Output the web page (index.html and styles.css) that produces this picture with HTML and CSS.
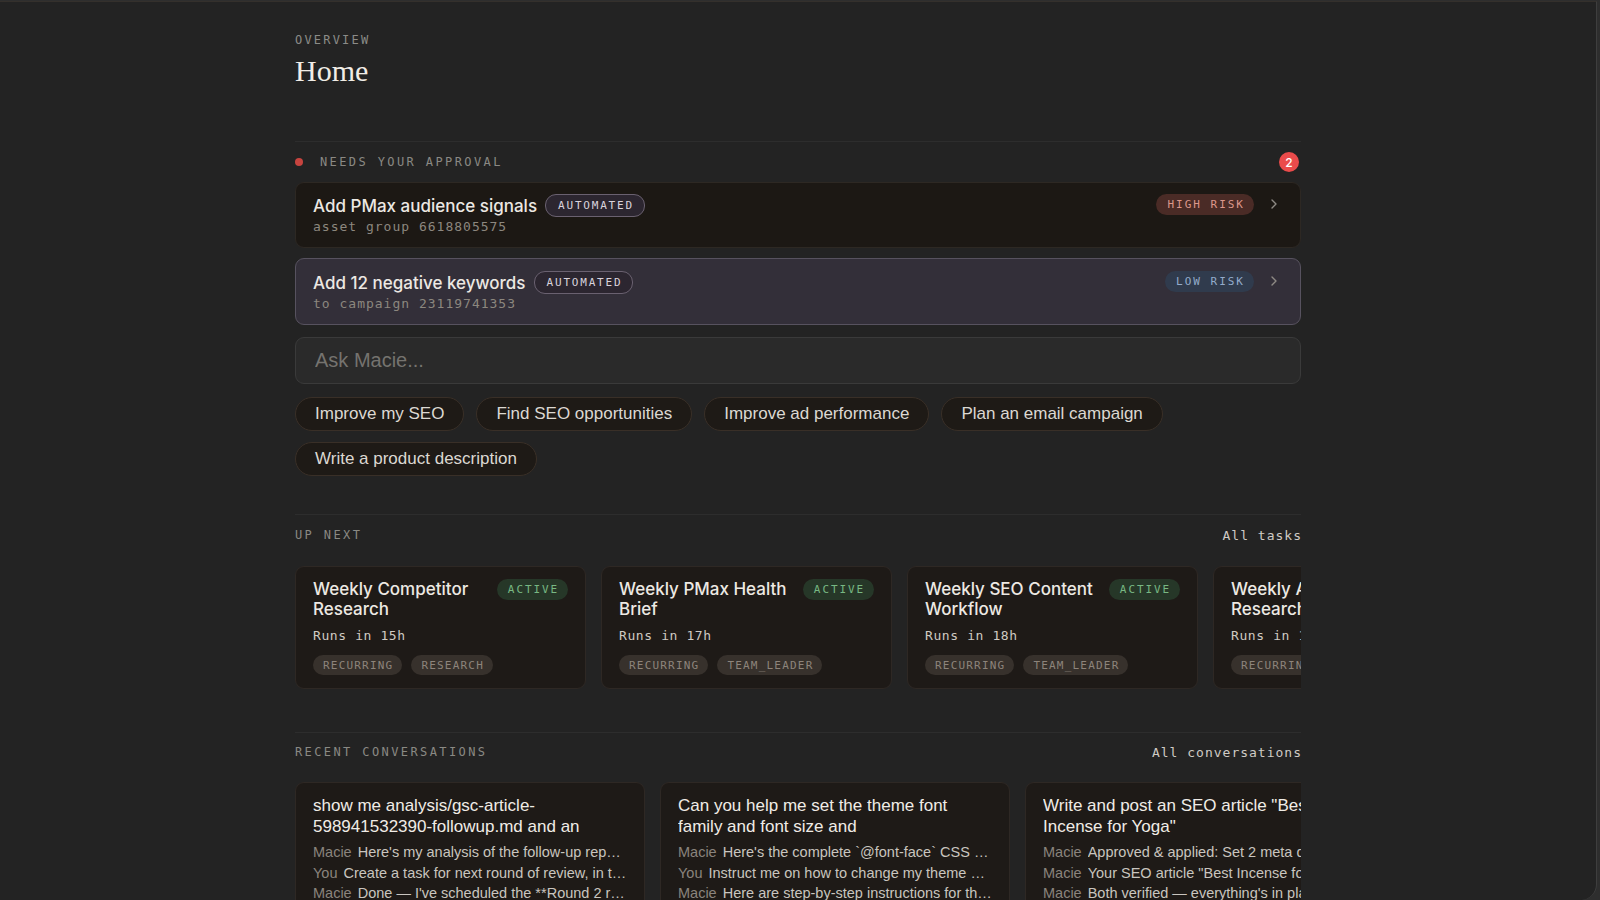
FILE: index.html
```html
<!DOCTYPE html>
<html lang="en">
<head>
    <meta charset="UTF-8">
    <meta name="viewport" content="width=device-width, initial-scale=1.0">
    <title>Home</title>
    <link rel="stylesheet" href="styles.css">
</head>
<body>
    <div class="panel">
        <main class="page">
            <header class="page-head">
                <div class="eyebrow">OVERVIEW</div>
                <h1>Home</h1>
            </header>

            <section class="section approvals">
                <div class="section-head">
                    <div class="section-title"><span class="dot"></span>NEEDS YOUR APPROVAL</div>
                    <span class="count">2</span>
                </div>

                <div class="approval-list">
                    <div class="approval">
                        <div class="approval-main">
                            <div class="approval-title">Add PMax audience signals <span class="pill pill-auto">AUTOMATED</span></div>
                            <div class="approval-sub">asset group 6618805575</div>
                        </div>
                        <div class="approval-side">
                            <span class="pill pill-high">HIGH RISK</span>
                            <svg class="chev" width="10" height="12" viewBox="0 0 10 12"><polyline points="3,2 7,6 3,10" fill="none" stroke="currentColor" stroke-width="1.4" stroke-linecap="round" stroke-linejoin="round"/></svg>
                        </div>
                    </div>
                    <div class="approval selected">
                        <div class="approval-main">
                            <div class="approval-title">Add 12 negative keywords <span class="pill pill-auto">AUTOMATED</span></div>
                            <div class="approval-sub">to campaign 23119741353</div>
                        </div>
                        <div class="approval-side">
                            <span class="pill pill-low">LOW RISK</span>
                            <svg class="chev" width="10" height="12" viewBox="0 0 10 12"><polyline points="3,2 7,6 3,10" fill="none" stroke="currentColor" stroke-width="1.4" stroke-linecap="round" stroke-linejoin="round"/></svg>
                        </div>
                    </div>
                </div>

                <input class="ask" type="text" placeholder="Ask Macie...">

                <div class="chips">
                    <button class="chip">Improve my SEO</button>
                    <button class="chip">Find SEO opportunities</button>
                    <button class="chip">Improve ad performance</button>
                    <button class="chip">Plan an email campaign</button>
                    <button class="chip">Write a product description</button>
                </div>
            </section>

            <section class="section upnext">
                <div class="section-head">
                    <div class="section-title">UP NEXT</div>
                    <a class="link" href="#">All tasks</a>
                </div>
                <div class="scroller">
                    <div class="task">
                        <div class="task-head">
                            <div class="task-title">Weekly Competitor Research</div>
                            <span class="pill pill-active">ACTIVE</span>
                        </div>
                        <div class="task-when">Runs in 15h</div>
                        <div class="tags"><span class="tag">RECURRING</span><span class="tag">RESEARCH</span></div>
                    </div>
                    <div class="task">
                        <div class="task-head">
                            <div class="task-title">Weekly PMax Health Brief</div>
                            <span class="pill pill-active">ACTIVE</span>
                        </div>
                        <div class="task-when">Runs in 17h</div>
                        <div class="tags"><span class="tag">RECURRING</span><span class="tag">TEAM_LEADER</span></div>
                    </div>
                    <div class="task">
                        <div class="task-head">
                            <div class="task-title">Weekly SEO Content Workflow</div>
                            <span class="pill pill-active">ACTIVE</span>
                        </div>
                        <div class="task-when">Runs in 18h</div>
                        <div class="tags"><span class="tag">RECURRING</span><span class="tag">TEAM_LEADER</span></div>
                    </div>
                    <div class="task">
                        <div class="task-head">
                            <div class="task-title">Weekly Ads Keyword Research</div>
                            <span class="pill pill-active">ACTIVE</span>
                        </div>
                        <div class="task-when">Runs in 19h</div>
                        <div class="tags"><span class="tag">RECURRING</span><span class="tag">RESEARCH</span></div>
                    </div>
                </div>
            </section>

            <section class="section recent">
                <div class="section-head">
                    <div class="section-title">RECENT CONVERSATIONS</div>
                    <a class="link" href="#">All conversations</a>
                </div>
                <div class="scroller">
                    <div class="convo">
                        <div class="convo-title">show me analysis/gsc-article-598941532390-followup.md and an</div>
                        <div class="msg"><span class="who">Macie</span><span class="said">Here's my analysis of the follow-up report you shared</span></div>
                        <div class="msg"><span class="who">You</span><span class="said">Create a task for next round of review, in two weeks</span></div>
                        <div class="msg"><span class="who">Macie</span><span class="said">Done — I've scheduled the **Round 2 review**</span></div>
                    </div>
                    <div class="convo">
                        <div class="convo-title">Can you help me set the theme font family and font size and</div>
                        <div class="msg"><span class="who">Macie</span><span class="said">Here's the complete `@font-face` CSS for your theme</span></div>
                        <div class="msg"><span class="who">You</span><span class="said">Instruct me on how to change my theme settings</span></div>
                        <div class="msg"><span class="who">Macie</span><span class="said">Here are step-by-step instructions for the theme editor</span></div>
                    </div>
                    <div class="convo">
                        <div class="convo-title">Write and post an SEO article "Best Incense for Yoga"</div>
                        <div class="msg"><span class="who">Macie</span><span class="said">Approved &amp; applied: Set 2 meta descriptions</span></div>
                        <div class="msg"><span class="who">Macie</span><span class="said">Your SEO article "Best Incense for Yoga" is live</span></div>
                        <div class="msg"><span class="who">Macie</span><span class="said">Both verified — everything's in place</span></div>
                    </div>
                </div>
            </section>
        </main>
    </div>
</body>
</html>
```

FILE: styles.css
```css
html, body {
    margin: 0;
    padding: 0;
    height: 100%;
    overflow: hidden;
}

body {
    background: #2e2e2e;
    font-family: Inter, "Liberation Sans", sans-serif;
    color: #ece8e3;
}

.panel {
    margin-top: 1px;
    width: 1597px;
    height: 899px;
    box-sizing: border-box;
    background: #232323;
    border-top: 1px solid #34302c;
    border-right: 1px solid #3e3e3e;
    border-bottom-right-radius: 16px;
    overflow: hidden;
}

.page {
    width: 1006px;
    padding-top: 30px;
    margin-left: 295px;
}

.eyebrow {
    font-family: "DejaVu Sans Mono", monospace;
    font-size: 12px;
    line-height: 16px;
    letter-spacing: 2.2px;
    color: #8b8b88;
}

h1 {
    margin: 6px 0 0;
    font-family: "Liberation Serif", serif;
    font-weight: normal;
    font-size: 30px;
    line-height: 34px;
    color: #f1ede6;
}

.page-head {
    padding-bottom: 53px;
}

.section {
    border-top: 1px solid #2d2d2d;
    padding-top: 12px;
}

.section-head {
    display: flex;
    justify-content: space-between;
    align-items: center;
    height: 16px;
    margin-bottom: 23px;
}

.approvals .section-head {
    margin-bottom: 12px;
}

.section-title {
    display: flex;
    align-items: center;
    font-family: "DejaVu Sans Mono", monospace;
    font-size: 12px;
    letter-spacing: 2.4px;
    color: #8a8984;
}

.dot {
    width: 8px;
    height: 8px;
    border-radius: 50%;
    background: #c7443f;
    margin-right: 17px;
}

.count {
    width: 20px;
    height: 20px;
    border-radius: 50%;
    background: #ea4b4b;
    color: #fff;
    font-size: 12px;
    font-weight: 500;
    display: flex;
    align-items: center;
    justify-content: center;
    margin-right: 2px;
}

.link {
    font-family: "DejaVu Sans Mono", monospace;
    font-size: 13px;
    letter-spacing: 1px;
    color: #cfcbc5;
    text-decoration: none;
    margin-right: -1px;
}

/* approvals */
.approval-list {
    display: flex;
    flex-direction: column;
    gap: 10px;
}

.approval {
    display: flex;
    justify-content: space-between;
    align-items: flex-start;
    padding: 11px 21px 13px 17px;
    height: 40px;
    background: #1c1814;
    border: 1px solid #2d2823;
    border-radius: 9px;
}

.approval.selected {
    background: #332f39;
    border-color: #57525f;
    padding-top: 12px;
}

.approval-title {
    display: flex;
    align-items: center;
    gap: 8px;
    font-size: 17px;
    font-weight: 500;
    line-height: 20px;
}

.approval-sub {
    font-family: "DejaVu Sans Mono", monospace;
    font-size: 13px;
    line-height: 20px;
    letter-spacing: 1px;
    color: #8c877f;
}

.approval-side {
    display: flex;
    align-items: center;
    gap: 15px;
    height: 20px;
}

.chev {
    color: #8e8a85;
}

.pill {
    display: inline-flex;
    align-items: center;
    font-family: "DejaVu Sans Mono", monospace;
    font-size: 11px;
    font-weight: normal;
    border-radius: 11px;
    white-space: nowrap;
}

.pill-auto {
    height: 21px;
    padding: 0 10px 0 12px;
    letter-spacing: 1.8px;
    background: #2c2630;
    border: 1px solid #6a6170;
    color: #d9d3dc;
}

.pill-high {
    height: 21px;
    padding: 0 9px 0 11px;
    letter-spacing: 2px;
    background: #4a2b26;
    color: #dc978b;
}

.pill-low {
    height: 21px;
    padding: 0 9px 0 11px;
    letter-spacing: 2px;
    background: #303b4d;
    color: #93abcb;
}

.pill-active {
    flex: none;
    height: 21px;
    padding: 0 9px 0 11px;
    letter-spacing: 1.9px;
    background: #263728;
    color: #78b883;
}

/* ask */
.ask {
    display: block;
    width: 100%;
    box-sizing: border-box;
    height: 47px;
    margin-top: 12px;
    padding: 0 19px;
    background: #2a2a2a;
    border: 1px solid #3a3a3a;
    border-radius: 9px;
    font-family: "Liberation Sans", sans-serif;
    font-size: 20px;
    color: #ddd;
    outline: none;
}

.ask::placeholder {
    color: #75736f;
}

.chips {
    display: flex;
    flex-wrap: wrap;
    gap: 11px 12px;
    margin-top: 13px;
    padding-bottom: 38px;
}

.chip {
    height: 34px;
    padding: 0 19px;
    background: #1e1a16;
    border: 1px solid #392f27;
    border-radius: 17px;
    font-family: "Liberation Sans", sans-serif;
    font-size: 17px;
    color: #dcd8d2;
    cursor: pointer;
}

/* tasks + conversations */
.scroller {
    display: flex;
    gap: 15px;
    overflow: hidden;
}

.upnext {
    padding-bottom: 43px;
}

.recent {
    padding-top: 11px;
}

.recent .section-head {
    margin-bottom: 22px;
}

.task {
    flex: 0 0 291px;
    min-width: 0;
    box-sizing: border-box;
    padding: 12px 17px 13px;
    background: #1e1a17;
    border: 1px solid #2e2824;
    border-radius: 9px;
}

.task-head {
    display: flex;
    gap: 10px;
    align-items: flex-start;
}

.task-title {
    flex: 1;
    font-size: 17px;
    font-weight: 500;
    line-height: 20px;
    color: #ede9e3;
}

.task-when {
    margin-top: 9px;
    font-family: "DejaVu Sans Mono", monospace;
    font-size: 13px;
    line-height: 16px;
    letter-spacing: 0.6px;
    color: #cfcac3;
}

.tags {
    display: flex;
    gap: 9px;
    margin-top: 11px;
}

.tag {
    height: 20px;
    display: inline-flex;
    align-items: center;
    padding: 0 9px 0 10px;
    border-radius: 10px;
    background: #37312c;
    color: #8d847b;
    font-family: "DejaVu Sans Mono", monospace;
    font-size: 11px;
    letter-spacing: 1.2px;
    white-space: nowrap;
}

.convo {
    flex: 0 0 350px;
    min-width: 0;
    box-sizing: border-box;
    padding: 13px 17px 10px;
    height: 140px;
    background: #1e1a17;
    border: 1px solid #2e2824;
    border-radius: 9px;
    font-family: "Liberation Sans", sans-serif;
}

.convo-title {
    font-size: 17px;
    line-height: 20.5px;
    color: #f0ece6;
    margin-bottom: 5px;
    height: 41px;
    overflow: hidden;
}

.msg {
    display: flex;
    gap: 6px;
    font-size: 14.5px;
    line-height: 20.5px;
    white-space: nowrap;
}

.who {
    flex: none;
    color: #8a847d;
}

.said {
    min-width: 0;
    color: #c9c5bf;
    overflow: hidden;
    text-overflow: ellipsis;
}
```
